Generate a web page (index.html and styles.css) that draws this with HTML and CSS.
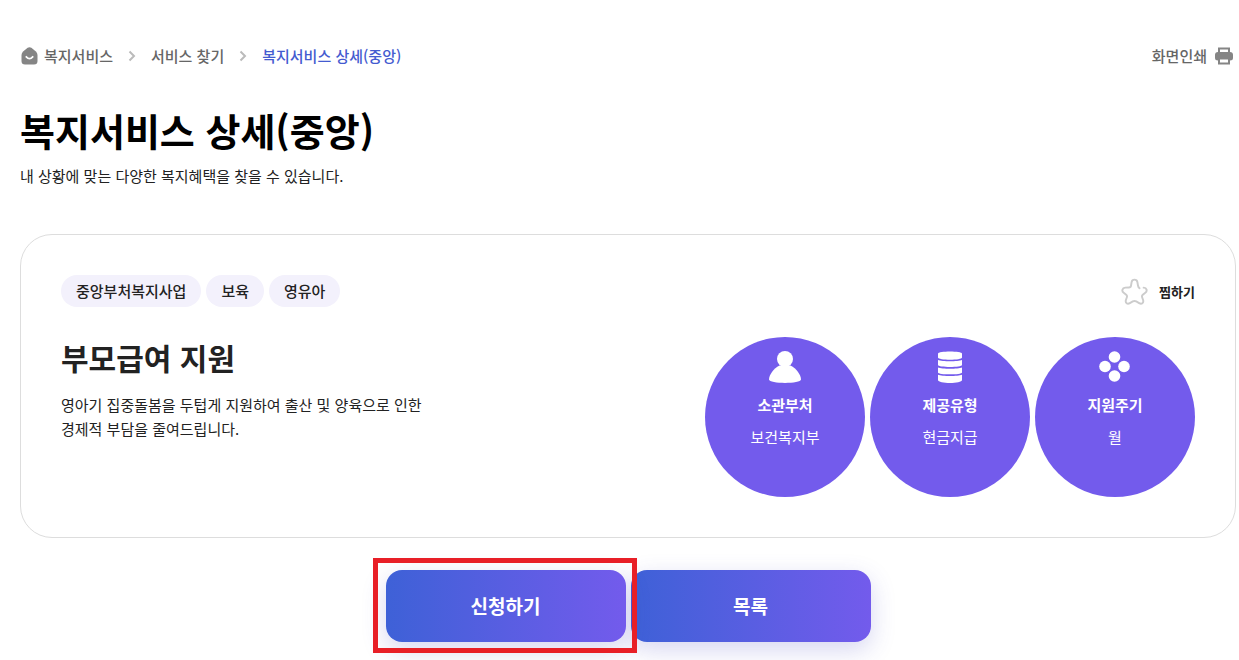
FILE: index.html
```
<!DOCTYPE html>
<html lang="ko">
<head>
  <meta charset="UTF-8">
  <meta name="viewport" content="width=device-width, initial-scale=1.0">
  <title>복지서비스 상세(중앙)</title>
  <link rel="stylesheet" href="styles.css">
</head>
<body>
  <main class="page">
    <div class="topbar">
      <nav class="breadcrumb">
        <a href="#" class="crumb">
          <svg width="18" height="18" viewBox="0 0 18 18">
            <path d="M7.6 .8Q9.500 -.4 11.400 .8L15.600 4.300Q17.500 6 17.500 8V14Q17.500 17.500 14 17.500H5Q1.500 17.500 1.500 14V8Q1.500 6 3.400 4.300Z" fill="#858585"/>
            <path d="M6.300 9.800Q9.500 13.400 12.700 9.800" fill="none" stroke="#fff" stroke-width="1.800" stroke-linecap="round"/>
          </svg>
          복지서비스
        </a>
        <svg class="arrow" width="8" height="12" viewBox="0 0 8 12"><path d="M1.5 1.5L6 6L1.5 10.5"/></svg>
        <a href="#" class="crumb">서비스 찾기</a>
        <svg class="arrow" width="8" height="12" viewBox="0 0 8 12"><path d="M1.5 1.5L6 6L1.5 10.5"/></svg>
        <a href="#" class="crumb current">복지서비스 상세(중앙)</a>
      </nav>
      <button type="button" class="print">
        화면인쇄
        <svg width="18" height="18" viewBox="0 0 18 18">
          <path d="M4 5.5V1.5H14V5.5" fill="none" stroke="#858585" stroke-width="2"/>
          <path d="M3 5H15Q18 5 18 8V11Q18 13.500 15 13.500H3Q0 13.500 0 11V8Q0 5 3 5Z" fill="#858585"/>
          <path d="M4 11.500H14V16.500H4Z" fill="#fff" stroke="#858585" stroke-width="2"/>
        </svg>
      </button>
    </div>

    <h1>복지서비스 상세(중앙)</h1>
    <p class="lead">내 상황에 맞는 다양한 복지혜택을 찾을 수 있습니다.</p>

    <section class="card">
      <div class="card-top">
        <ul class="tags">
          <li>중앙부처복지사업</li>
          <li>보육</li>
          <li>영유아</li>
        </ul>
        <button type="button" class="favorite">
          <svg width="27" height="27" viewBox="0 0 28 28">
            <path d="M19.200 10.600C18 9.700 17.800 9 17.600 7.800L17 4.300C16.400 .8 11.600 .8 11 4.300L10.400 7.800C10.200 9.400 9.500 9.800 8.200 9.800L4.400 10C1.200 10.300 .4 13.600 2.800 15.400L5.400 17.400C6.400 18.200 6.500 18.800 6.100 20L5.100 22.800C4.200 25.800 6.600 27.600 9.200 26L12.200 24.300C13.500 23.600 14.500 23.600 15.800 24.300L18.800 26C21.400 27.600 23.800 25.800 22.900 22.800L21.900 20C21.500 18.800 21.600 18.200 22.600 17.400L25.200 15.400C27.600 13.500 26.800 10.200 23.500 10" fill="none" stroke="#ccc" stroke-width="2" stroke-linecap="round"/>
          </svg>
          찜하기
        </button>
      </div>

      <div class="card-body">
        <div class="info">
          <h2>부모급여 지원</h2>
          <p>영아기 집중돌봄을 두텁게 지원하여 출산 및 양육으로 인한<br>경제적 부담을 줄여드립니다.</p>
        </div>
        <dl class="circles">
          <div class="circle">
            <svg width="32" height="32" viewBox="0 0 32 32" fill="#fff">
              <circle cx="16" cy="8" r="8"/>
              <path d="M10.5 14.5H21.5C27.5 17.5 32 24 32 28.5C32 33 0 33 0 28.5C0 24 4.500 17.5 10.500 14.5Z"/>
            </svg>
            <dt>소관부처</dt>
            <dd>보건복지부</dd>
          </div>
          <div class="circle">
            <svg width="32" height="32" viewBox="0 0 32 32" fill="#fff">
              <path d="M4 2.500C4 -.3 28 -.3 28 2.500V6.500C28 9.500 4 9.500 4 6.500Z"/>
              <path d="M4 9C8 10.700 24 10.700 28 9V14C28 16.600 4 16.600 4 14Z"/>
              <path d="M4 16.400C8 18.100 24 18.100 28 16.400V21.400C28 24 4 24 4 21.400Z"/>
              <path d="M4 23.800C8 25.500 24 25.500 28 23.800V29C28 33 4 33 4 29Z"/>
            </svg>
            <dt>제공유형</dt>
            <dd>현금지급</dd>
          </div>
          <div class="circle">
            <svg width="32" height="32" viewBox="0 0 32 32" fill="#fff">
              <circle cx="15.500" cy="6" r="5.800"/>
              <circle cx="6" cy="15.500" r="5.800"/>
              <circle cx="25" cy="15.500" r="5.800"/>
              <circle cx="15.500" cy="25" r="5.800"/>
            </svg>
            <dt>지원주기</dt>
            <dd>월</dd>
          </div>
        </dl>
      </div>
    </section>

    <div class="actions">
      <div class="marked">
        <button type="button" class="btn">신청하기</button>
      </div>
      <button type="button" class="btn">목록</button>
    </div>
  </main>
</body>
</html>
```
FILE: styles.css
```
* {
  box-sizing: border-box;
}

body {
  margin: 0;
  background-color: #fff;
  color: #222;
  font-family: 'Noto Sans CJK KR', sans-serif;
  font-size: 15px;
  line-height: 24px;
}

h1, h2, p, ul, dl, dd {
  margin: 0;
  padding: 0;
}

button {
  padding: 0;
  border: none;
  background: none;
  font-family: inherit;
  cursor: pointer;
}

.page {
  padding: 44px 3px 18px 20px;
}

.topbar {
  display: flex;
  justify-content: space-between;
  align-items: center;
}

.breadcrumb {
  display: flex;
  align-items: center;
  gap: 15px;
}

.crumb {
  display: flex;
  align-items: center;
  gap: 6px;
  color: #666;
  font-weight: 500;
  text-decoration: none;
}

.crumb.current {
  color: #445bd0;
}

.arrow {
  fill: none;
  stroke: #bbb;
  stroke-width: 2;
}

.print {
  display: flex;
  align-items: center;
  gap: 8px;
  padding-right: 3px;
  color: #666;
  font-size: 15px;
  font-weight: 500;
  line-height: 24px;
}

h1 {
  margin-top: 34px;
  color: #000;
  font-size: 38px;
  font-weight: 700;
  line-height: 56px;
}

.lead {
  margin-top: 6px;
}

.card {
  margin-top: 46px;
  padding: 40px;
  border: 1px solid #ddd;
  border-radius: 32px;
}

.card-top {
  display: flex;
  justify-content: space-between;
  align-items: center;
}

.tags {
  display: flex;
  gap: 5px;
  list-style: none;
}

.tags li {
  padding: 4px 15px;
  border-radius: 16px;
  background-color: #f3f1fc;
  font-weight: 500;
}

.favorite {
  display: flex;
  align-items: center;
  gap: 11px;
  color: #222;
  font-size: 13px;
  font-weight: 700;
}

.card-body {
  display: flex;
  justify-content: space-between;
  margin-top: 30px;
}

h2 {
  font-size: 30px;
  font-weight: 700;
  line-height: 40px;
}

.info p {
  margin-top: 16px;
}

.circles {
  display: flex;
  gap: 5px;
}

.circle {
  width: 160px;
  height: 160px;
  padding-top: 14px;
  border-radius: 50%;
  background-color: #735bec;
  color: #fff;
  text-align: center;
}

.circle svg {
  display: block;
  margin: 0 auto 10px;
}

.circle dt {
  font-weight: 700;
}

.circle dd {
  margin-top: 8px;
}

.actions {
  display: flex;
  justify-content: center;
  gap: 5px;
  margin-top: 32px;
}

.btn {
  display: block;
  width: 240px;
  height: 72px;
  border-radius: 16px;
  background: linear-gradient(to right, #3e61d7, #735bec);
  box-shadow: 0 8px 24px rgba(68, 68, 190, 0.22);
  color: #fff;
  font-size: 19px;
  font-weight: 700;
  line-height: 28px;
}

.marked {
  position: relative;
}

/* red frame around the apply button */
.marked::after {
  content: '';
  position: absolute;
  z-index: 1;
  top: -12px;
  right: -11px;
  bottom: -11px;
  left: -13px;
  border: 5px solid #e81f27;
  pointer-events: none;
}
```
